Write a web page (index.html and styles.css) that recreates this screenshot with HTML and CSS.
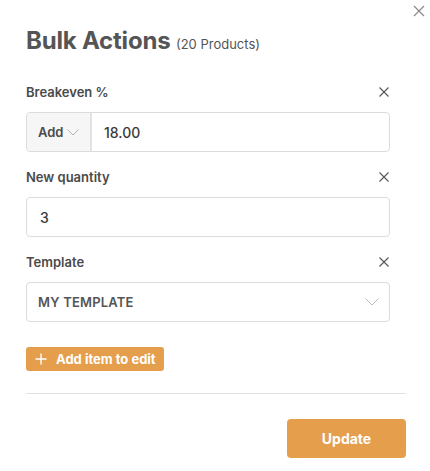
FILE: index.html
```html
<!DOCTYPE html>
<html>
<head>
<meta charset="utf-8">
<link rel="stylesheet" href="styles.css">
</head>
<body>
<div class="modal">
  <button class="close-modal" aria-label="Close">
    <svg viewBox="0 0 12 12" width="12" height="12"><path d="M1 1L11 11M11 1L1 11" stroke="#8a8a8a" stroke-width="1.2" fill="none"/></svg>
  </button>
  <h1 class="title">Bulk Actions <span class="count">(20 Products)</span></h1>

  <div class="field">
    <div class="field-head">
      <span class="label">Breakeven %</span>
      <svg class="x" viewBox="0 0 10 10" width="10" height="10"><path d="M0.5 0.5L9.5 9.5M9.5 0.5L0.5 9.5" stroke="#555" stroke-width="1.1" fill="none"/></svg>
    </div>
    <div class="input group">
      <div class="addon">Add <svg viewBox="0 0 12 7" width="12" height="7"><path d="M0.5 0.5L6 6L11.5 0.5" stroke="#b5b5b5" stroke-width="1" fill="none"/></svg></div>
      <div class="value">18.00</div>
    </div>
  </div>

  <div class="field">
    <div class="field-head">
      <span class="label">New quantity</span>
      <svg class="x" viewBox="0 0 10 10" width="10" height="10"><path d="M0.5 0.5L9.5 9.5M9.5 0.5L0.5 9.5" stroke="#555" stroke-width="1.1" fill="none"/></svg>
    </div>
    <div class="input"><div class="value">3</div></div>
  </div>

  <div class="field">
    <div class="field-head">
      <span class="label">Template</span>
      <svg class="x" viewBox="0 0 10 10" width="10" height="10"><path d="M0.5 0.5L9.5 9.5M9.5 0.5L0.5 9.5" stroke="#555" stroke-width="1.1" fill="none"/></svg>
    </div>
    <div class="input select">
      <div class="value caps">MY TEMPLATE</div>
      <svg class="chev" viewBox="0 0 14 8" width="14" height="8"><path d="M0.5 0.5L7 7L13.5 0.5" stroke="#bdbdbd" stroke-width="1" fill="none"/></svg>
    </div>
  </div>

  <button class="add-item">
    <svg viewBox="0 0 12 12" width="12" height="12"><path d="M6 0.5V11.5M0.5 6H11.5" stroke="#fff" stroke-width="1.4" fill="none"/></svg>
    Add item to edit
  </button>

  <hr class="divider">

  <div class="footer">
    <button class="update">Update</button>
  </div>
</div>
</body>
</html>
```

FILE: styles.css
```css
* { box-sizing: border-box; }
body {
  margin: 0;
  background: #fff;
  font-family: Inter, "Noto Sans", sans-serif;
  color: #4a4a4a;
}
.modal {
  position: relative;
  width: 430px;
  height: 471px;
  padding: 25px 24px 0 26px;
}
.close-modal {
  position: absolute;
  top: 5px;
  right: 5px;
  width: 12px;
  height: 12px;
  padding: 0;
  border: 0;
  background: none;
  display: flex;
}
.title {
  margin: 0;
  height: 32px;
  font-size: 24px;
  line-height: 32px;
  font-weight: 700;
  color: #555;
  letter-spacing: -0.2px;
}
.count {
  font-size: 13px;
  line-height: 1;
  font-weight: 400;
  letter-spacing: 0;
  color: #555;
}
.field {
  width: 364px;
  margin-top: 15px;
}
.title + .field { margin-top: 25px; }
.field-head {
  display: flex;
  justify-content: space-between;
  align-items: center;
  height: 20px;
  margin-bottom: 10px;
}
.label {
  font-size: 13px;
  line-height: 20px;
  font-weight: 600;
  color: #4a4a4a;
}
.x { margin-right: 1px; }
.input {
  height: 40px;
  border: 1px solid #dcdcdc;
  border-radius: 4px;
  display: flex;
  align-items: center;
  background: #fff;
}
.value {
  padding-left: 13px;
  font-size: 14px;
  font-weight: 500;
  color: #3a3a3a;
}
.group { overflow: hidden; }
.addon {
  height: 100%;
  width: 65px;
  background: #f6f6f6;
  border-right: 2px solid #e2e2e2;
  display: flex;
  align-items: center;
  gap: 3px;
  padding-left: 11px;
  font-size: 13px;
  font-weight: 600;
  color: #4a4a4a;
}
.group .value { padding-left: 12px; }
.select { justify-content: space-between; padding-right: 10px; }
.caps { font-size: 13px; font-weight: 600; color: #555; letter-spacing: 0.2px; padding-left: 11px; }
.add-item {
  margin-top: 25px;
  height: 24px;
  padding: 0 8px 0 9px;
  border: 0;
  border-radius: 3px;
  background: #e59e4b;
  color: #fff;
  font-family: inherit;
  font-size: 13px;
  font-weight: 700;
  display: flex;
  align-items: center;
  gap: 9px;
}
.divider {
  margin: 22px 0 0;
  width: 380px;
  border: 0;
  border-top: 1px solid #e3e3e3;
}
.footer {
  width: 380px;
  display: flex;
  justify-content: flex-end;
  margin-top: 25px;
}
.update {
  width: 119px;
  height: 39px;
  border: 0;
  border-radius: 4px;
  background: #e59e4b;
  color: #fff;
  font-family: inherit;
  font-size: 14px;
  font-weight: 700;
}
```
